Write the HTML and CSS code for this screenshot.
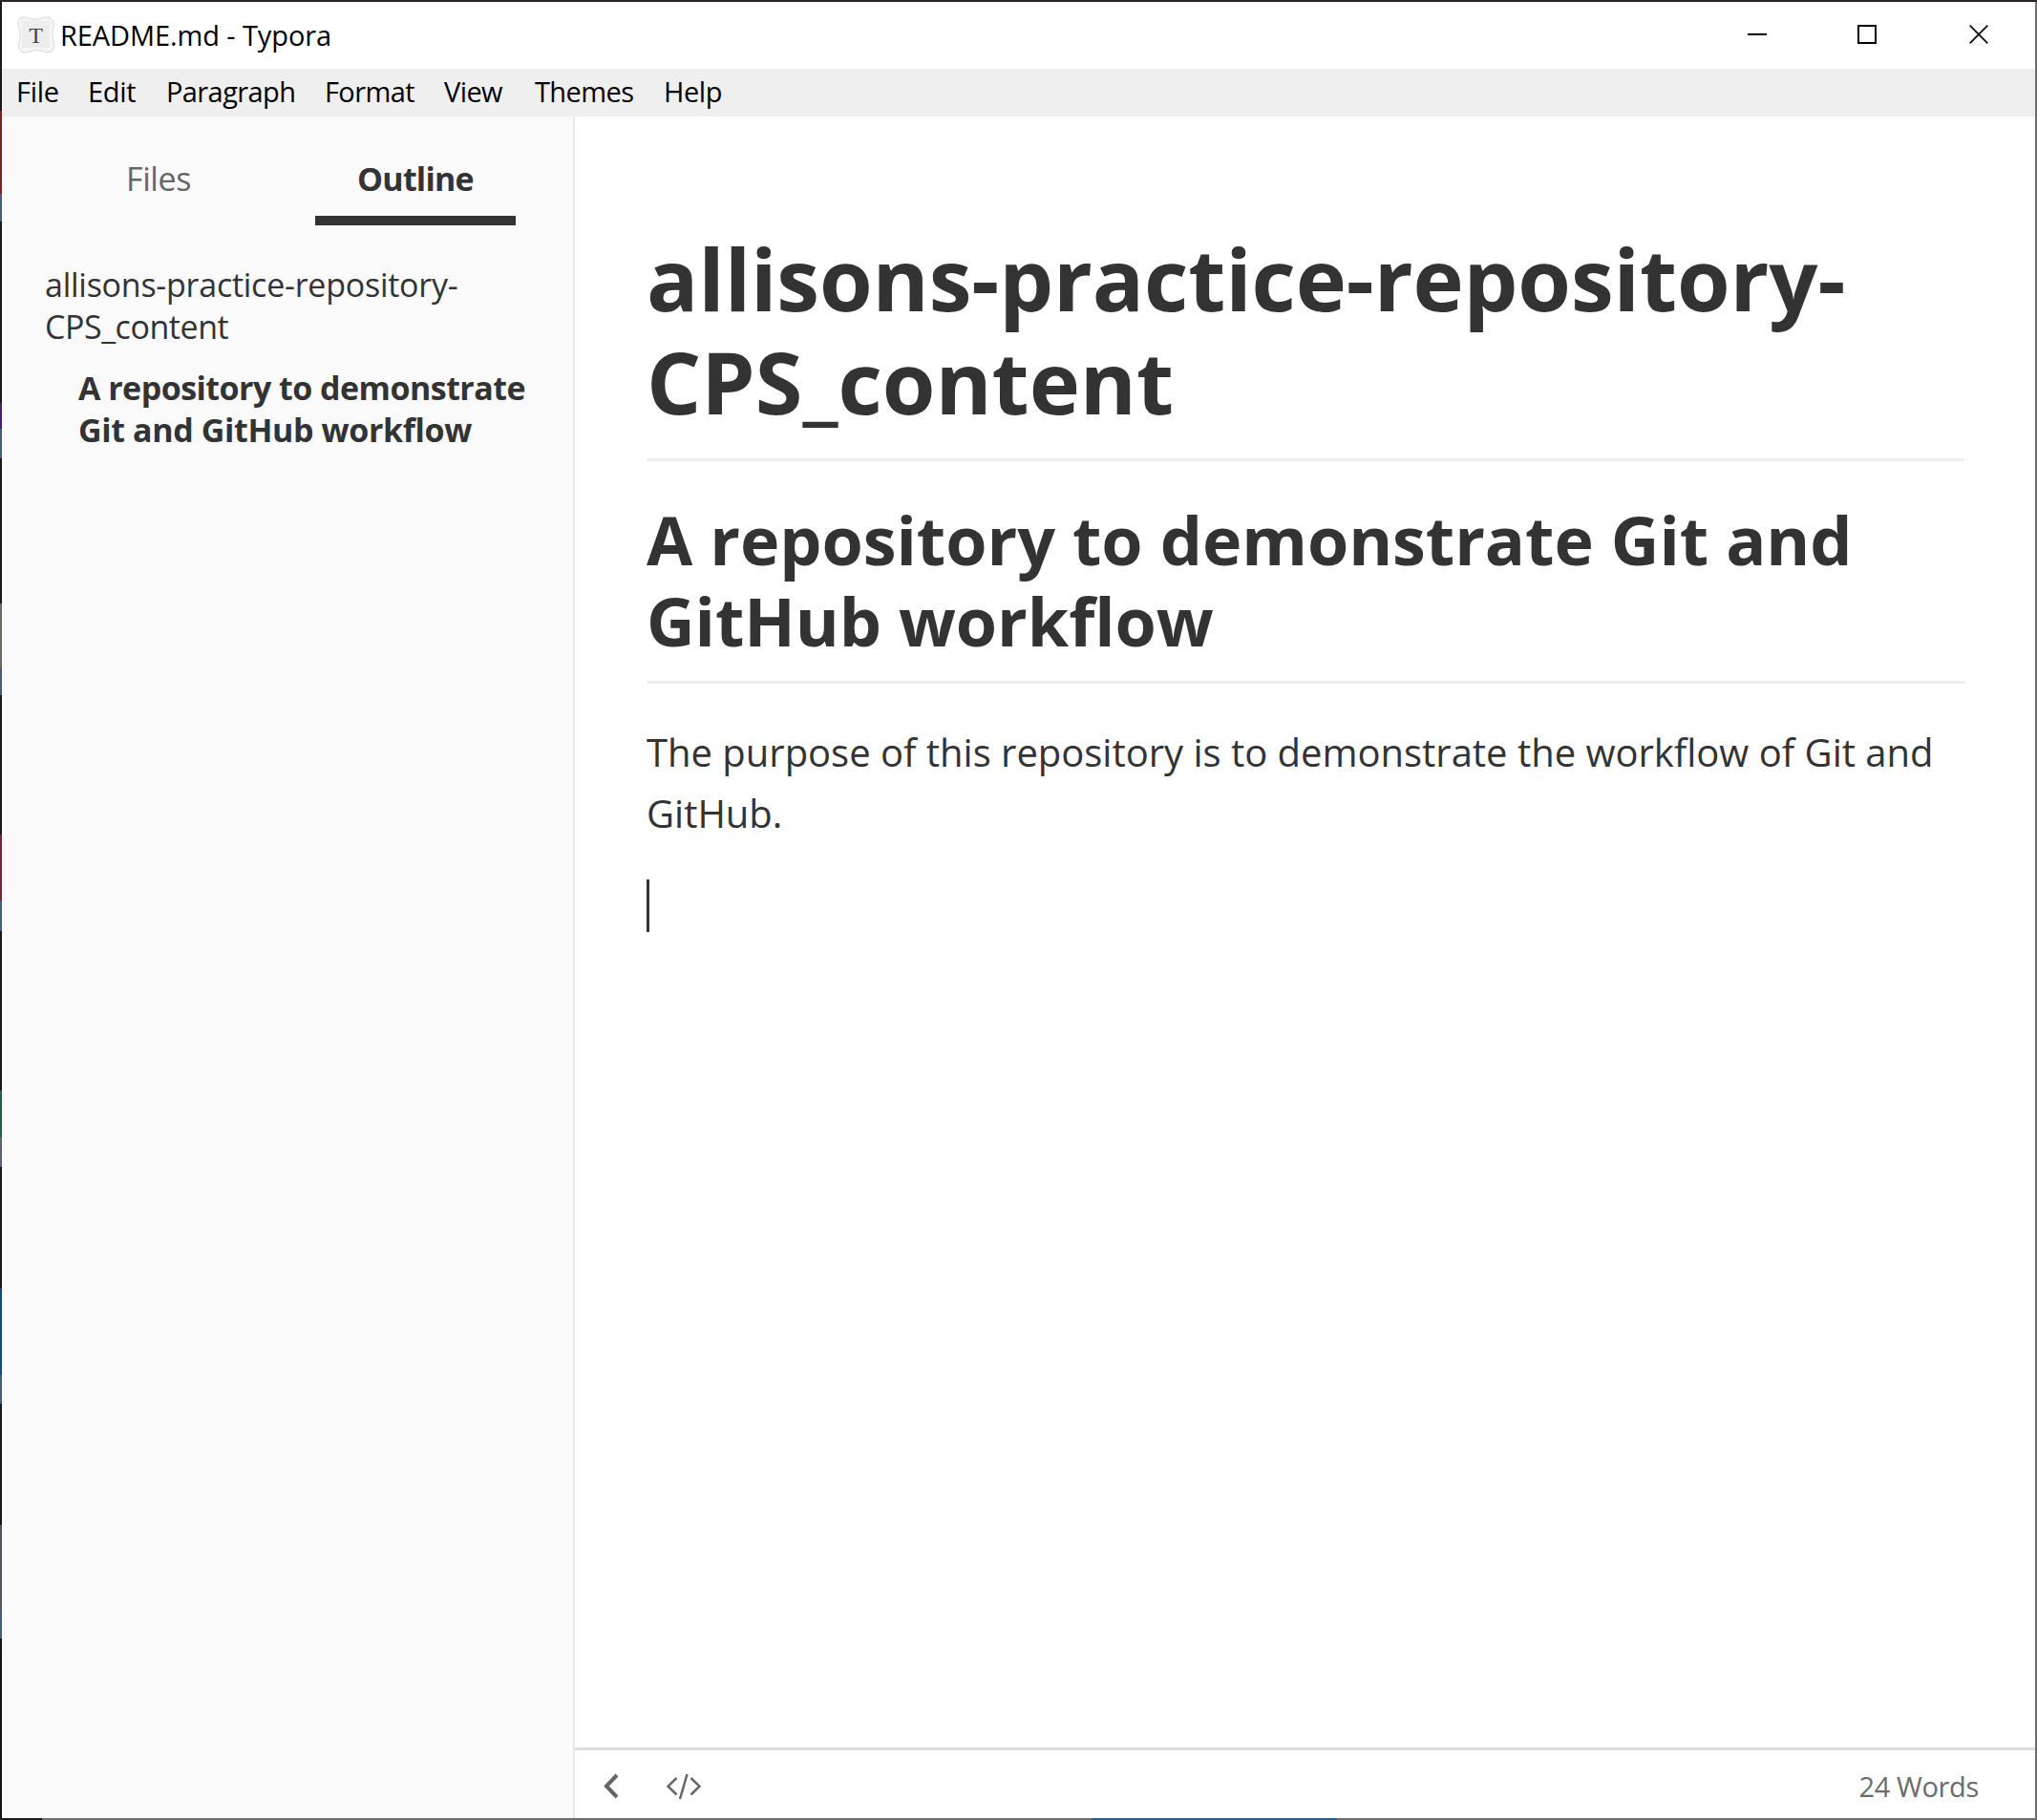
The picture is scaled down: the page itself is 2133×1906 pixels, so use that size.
FILE: index.html
```html
<!DOCTYPE html>
<html lang="en">
<head>
<meta charset="utf-8">
<title>README.md - Typora</title>
<link rel="stylesheet" href="styles.css">
</head>
<body>
<div class="window">
  <header class="titlebar">
    <svg class="app-icon" width="40" height="40" viewBox="0 0 40 40">
      <path d="M3 2 Q8 0 12 2 Q20 5 28 1 Q36 0 38 6 Q39 11 37 15 Q36 20 38 26 Q40 34 36 37 Q30 39 24 36 Q18 34 13 37 Q5 40 2 34 Q0 30 3 25 Q4 18 2 13 Q-1 6 3 2Z" fill="#f6f6f6" stroke="#d9d9d9" stroke-width="1"/>
      <rect x="5" y="5" width="29" height="28" fill="#ededed"/>
      <text x="19.5" y="28" text-anchor="middle" class="app-letter">T</text>
    </svg>
    <h1 class="window-title">README.md - Typora</h1>
    <div class="controls">
      <svg class="minimize" width="20" height="20" viewBox="0 0 20 20"><path d="M0 10H20" stroke="#000" stroke-width="2"/></svg>
      <svg class="maximize" width="20" height="20" viewBox="0 0 20 20"><rect x="1" y="1" width="18" height="18" fill="none" stroke="#000" stroke-width="2"/></svg>
      <svg width="20" height="20" viewBox="0 0 20 20"><path d="M.7.7L19.3 19.3M19.3.7L.7 19.3" stroke="#111" stroke-width="1.9"/></svg>
    </div>
  </header>
  <nav class="menubar">
    <span class="m-file">File</span><span class="m-edit">Edit</span><span class="m-para">Paragraph</span><span class="m-format">Format</span><span class="m-view">View</span><span class="m-themes">Themes</span><span class="m-help">Help</span>
  </nav>
  <div class="workspace">
    <aside class="sidebar">
      <div class="tabs">
        <span class="tab">Files</span>
        <span class="tab active">Outline</span>
      </div>
      <div class="outline">
        <p class="level-1"><span class="first-line">allisons-practice-repository-</span><br>CPS_content</p>
        <p class="level-2"><span class="first-line">A repository to demonstrate</span><br>Git and GitHub workflow</p>
      </div>
    </aside>
    <main class="editor">
      <article class="document">
        <h1><span class="first-line">allisons-practice-repository-</span><br>CPS_content</h1>
        <h2>A repository to demonstrate Git and GitHub workflow</h2>
        <p>The purpose of this repository is to demonstrate the workflow of Git and GitHub.</p>
        <div class="caret"></div>
      </article>
      <footer class="statusbar">
        <svg class="back" width="16" height="28" viewBox="0 0 16 28"><path d="M14 2L3 13.5L14 25" fill="none" stroke="#666" stroke-width="4"/></svg>
        <svg width="36" height="28" viewBox="0 0 36 28"><path d="M10.5 5L1.5 13.7L10.5 22.5M25.5 5L34.5 13.7L25.5 22.5M21.5 1L14 27" fill="none" stroke="#666" stroke-width="2.5"/></svg>
        <span class="words">24 Words</span>
      </footer>
    </main>
  </div>
</div>
</body>
</html>
```
FILE: styles.css
```css
* { box-sizing: border-box; }
body { margin: 0; font-family: "Open Sans", sans-serif; color: #333; }
h1, h2, p { margin: 0; }
svg { display: block; }

.window {
  width: 2133px;
  height: 1906px;
  display: flex;
  flex-direction: column;
  padding: 2px;
  background:
    linear-gradient(#2a2628, #2a2628) 0 0 / 100% 2px no-repeat,
    linear-gradient(90deg, #1c1c1c 44px, #707070 44px 1143px, #2b5f94 1143px 1400px, #707070 1400px) 0 100% / 100% 2px no-repeat,
    linear-gradient(#1a1a1c 116px, #7c2024 116px 203px, #4a5c7c 203px 232px, #18181a 232px 422px, #43206a 422px 449px, #4a5c7c 449px 480px, #18181a 480px 632px, #6c6866 632px 699px, #4a5c7c 699px 728px, #18181a 728px 874px, #802038 874px 943px, #4a5c7c 943px 975px, #18181a 975px 1142px, #206040 1142px 1191px, #5c6270 1191px 1222px, #18181a 1222px 1349px, #144880 1349px 1440px, #4a5c7c 1440px 1470px, #18181a 1470px 1597px, #55555a 1597px 1684px, #4a5c7c 1684px 1716px, #141416 1716px) 0 0 / 2px 100% no-repeat,
    #6e6e6e;
}
.titlebar { height: 70px; display: flex; align-items: center; padding: 0 49px 0 16px; background: #fff; color: #000; }
.app-icon { margin-right: 5px; }
.app-letter { font: 24px "Liberation Serif", serif; fill: #444; }
.window-title { font-size: 29px; font-weight: 400; line-height: 40px; letter-spacing: -0.1px; }
.controls { margin-left: auto; display: flex; padding-bottom: 2px; }
.minimize { margin-right: 95px; }
.maximize { margin-right: 97px; }
.menubar { height: 50px; display: flex; padding-left: 15px; background: #efefef; color: #000; font-size: 29px; line-height: 48px; letter-spacing: -0.6px; white-space: nowrap; }
.m-file { width: 75px; letter-spacing: -0.3px; }
.m-edit { width: 82px; letter-spacing: -0.3px; }
.m-para { width: 166px; }
.m-format { width: 125px; }
.m-view { width: 95px; }
.m-themes { width: 135px; }
.m-help { letter-spacing: -0.4px; }
.workspace { flex: 1; display: flex; min-height: 0; }
.sidebar { width: 600px; background: #fafafa; border-right: 2px solid #e7e7e7; }
.tabs { display: flex; justify-content: space-between; padding: 32px 60px 0 58px; }
.tab { width: 210px; height: 82px; padding-left: 2px; text-align: center; font-size: 34px; line-height: 66px; letter-spacing: -0.4px; color: #666; }
.active { padding-left: 0; font-weight: 700; color: #333; border-bottom: 10px solid #333; letter-spacing: -0.8px; }
.outline { padding: 40px 0 0 45px; font-size: 34px; line-height: 44px; white-space: nowrap; }
.level-1 { letter-spacing: -0.45px; }
.level-1 .first-line { letter-spacing: -0.25px; }
.level-2 { margin-top: 20px; padding-left: 35px; font-weight: 700; letter-spacing: -0.38px; }
.level-2 .first-line { letter-spacing: -0.54px; }
.editor { flex: 1; display: flex; flex-direction: column; background: #fff; }
.document { flex: 1; padding: 115px 74px 0 75px; }
.document h1 { font-size: 90px; line-height: 108px; padding-bottom: 27px; border-bottom: 3px solid #eee; }
.document h1 .first-line { letter-spacing: -0.1px; }
.document h2 { margin-top: 40px; font-size: 70px; line-height: 85px; letter-spacing: -0.07px; padding-bottom: 20px; border-bottom: 3px solid #eee; }
.document p { margin-top: 40px; font-size: 40px; line-height: 64px; letter-spacing: -0.02px; }
.caret { width: 3px; height: 55px; margin-top: 37px; background: #333; }
.statusbar { height: 74px; display: flex; align-items: center; padding: 4px 59px 0 30px; border-top: 3px solid #ddd; color: #6b6b6b; }
.back { margin-right: 50px; }
.words { margin-left: auto; font-size: 29px; line-height: 40px; letter-spacing: -0.35px; }
```
